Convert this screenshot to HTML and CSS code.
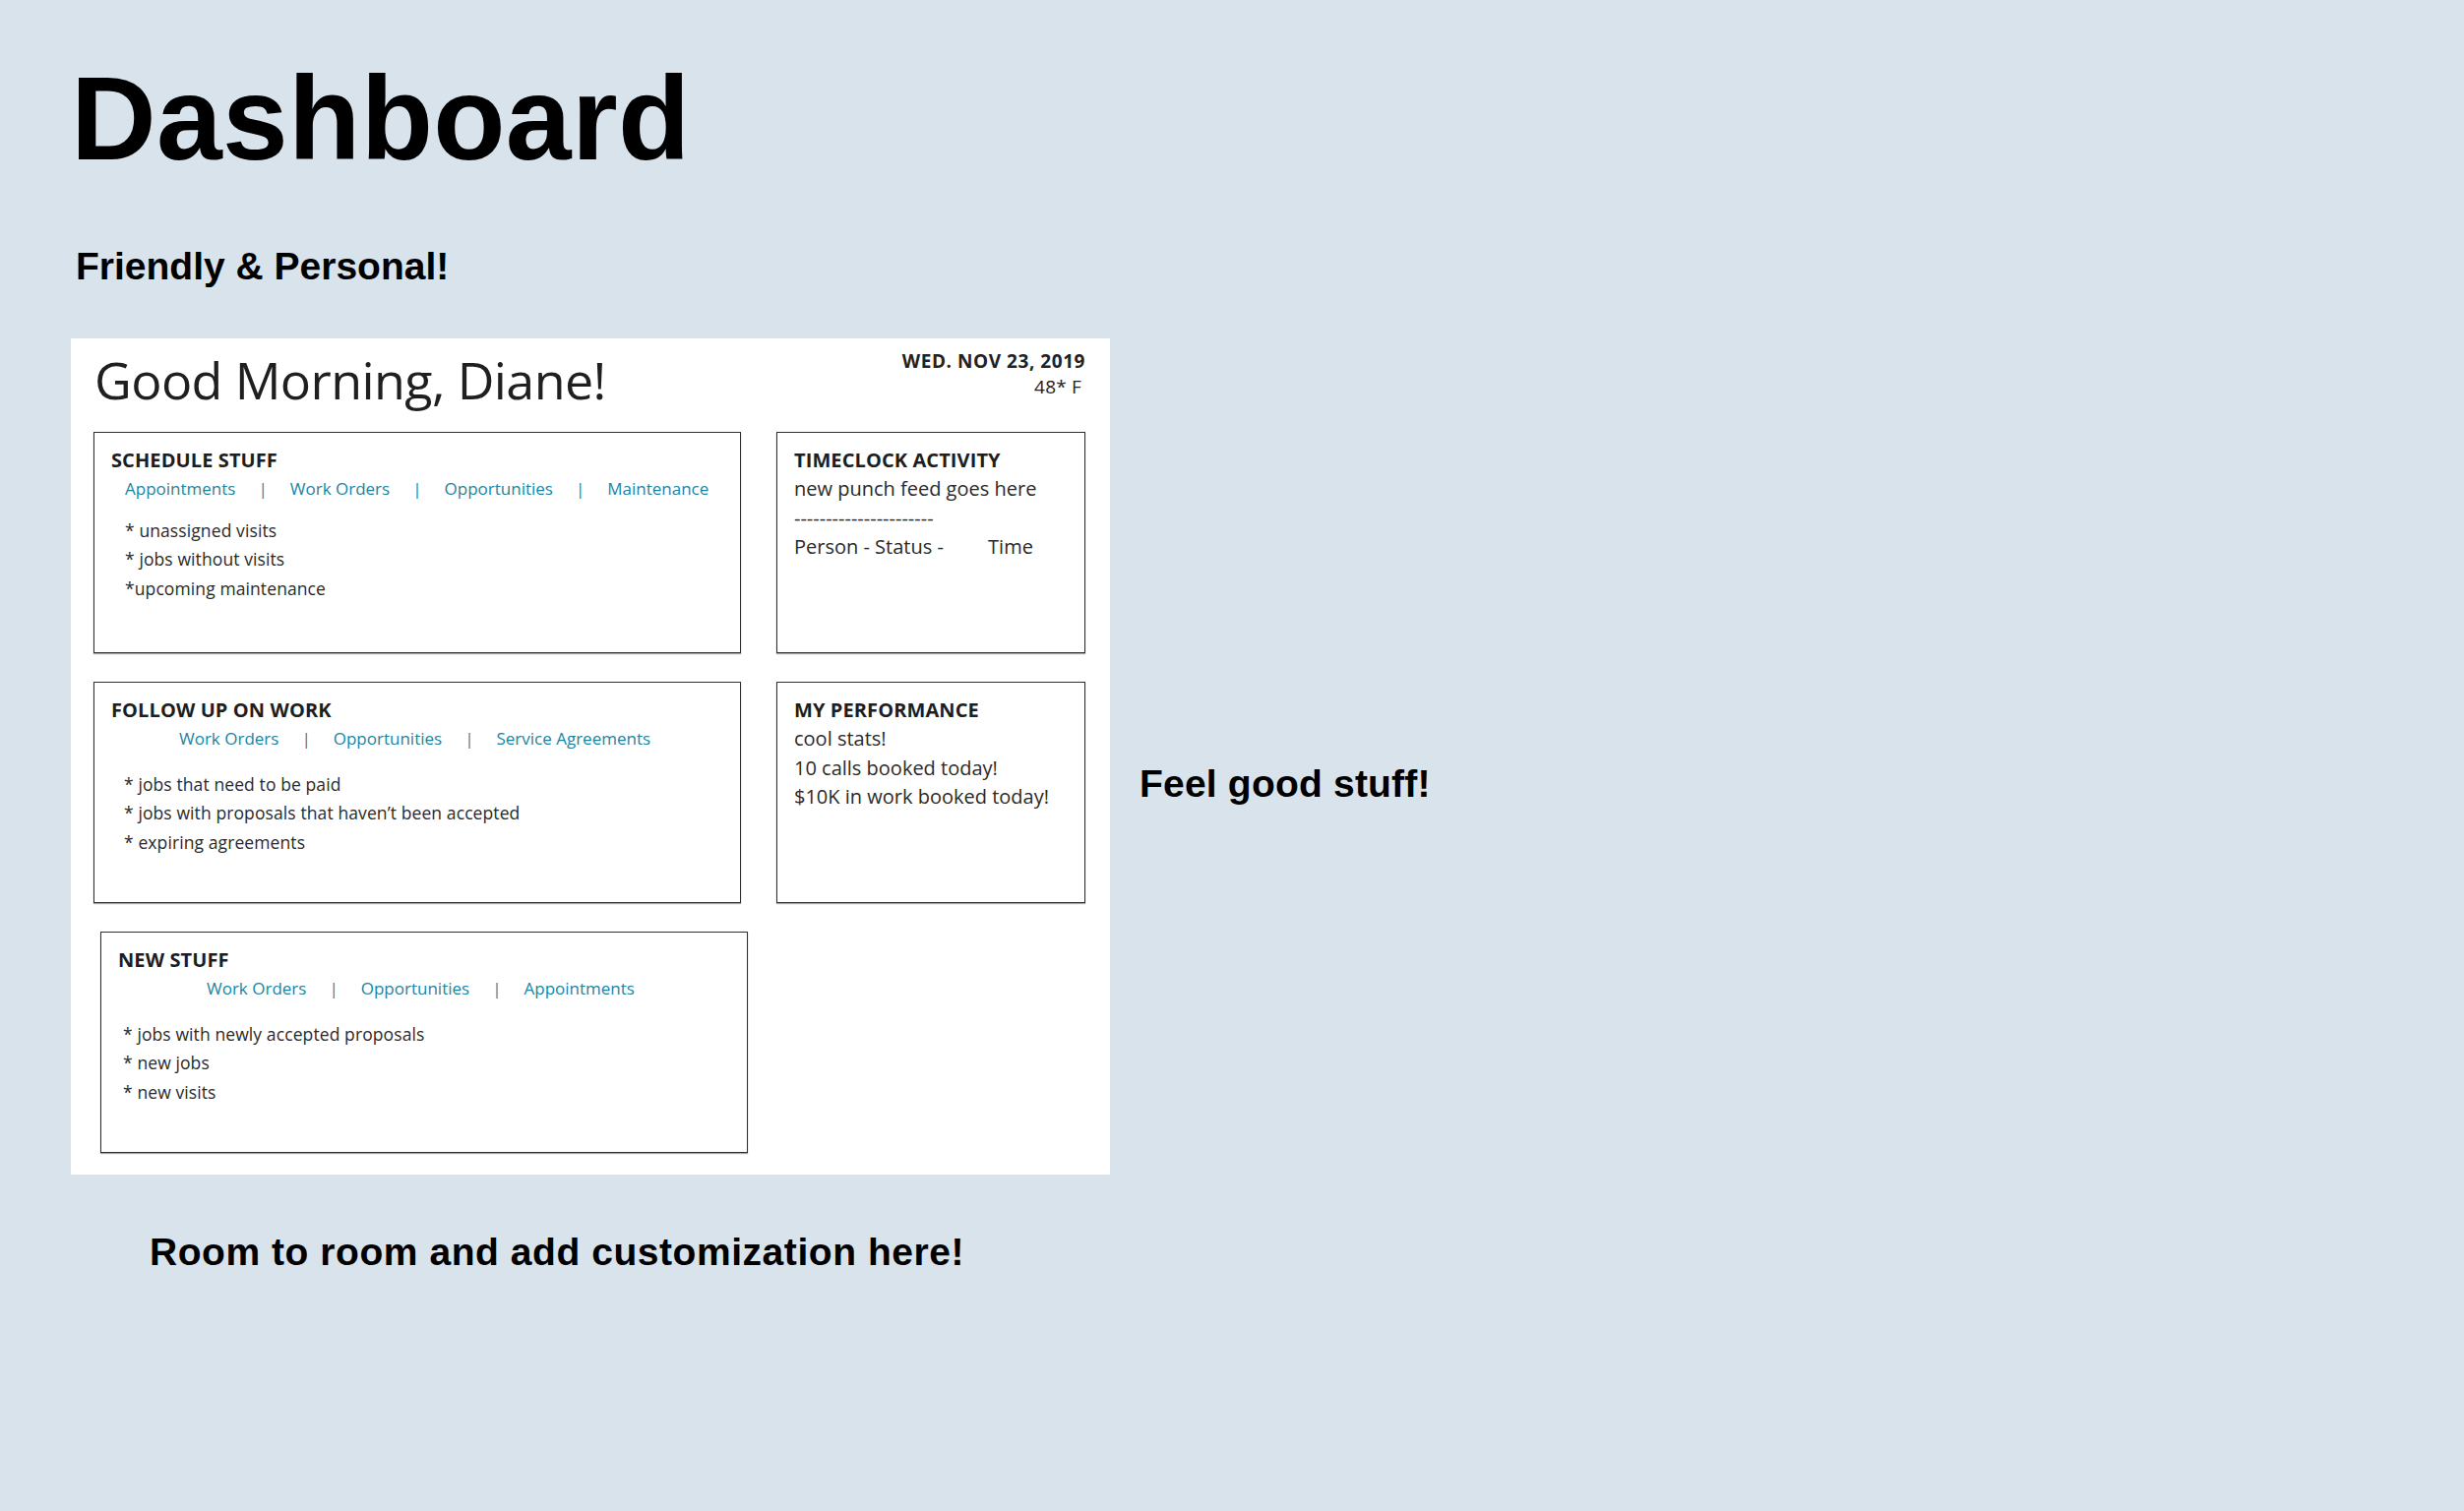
FILE: index.html
```html
<!DOCTYPE html>
<html lang="en">
<head>
<meta charset="utf-8">
<title>Dashboard</title>
<link rel="stylesheet" href="styles.css">
</head>
<body>
<div class="page">
  <h1 class="title">Dashboard</h1>
  <h2 class="note note-friendly">Friendly &amp; Personal!</h2>
  <div class="main-row">
    <section class="panel">
      <header class="panel-header">
        <h2 class="greeting">Good Morning, Diane!</h2>
        <div class="date-block">
          <div class="date">WED. NOV 23, 2019</div>
          <div class="temp">48* F</div>
        </div>
      </header>
      <div class="grid">
        <div class="box">
          <div class="box-title">SCHEDULE STUFF</div>
          <div class="links links-schedule">
            <span>Appointments</span><span>|</span><span>Work Orders</span><span>|</span><span>Opportunities</span><span>|</span><span>Maintenance</span>
          </div>
          <ul class="bullets bullets-schedule">
            <li>* unassigned visits</li>
            <li>* jobs without visits</li>
            <li>*upcoming maintenance</li>
          </ul>
        </div>
        <div class="box">
          <div class="box-title">TIMECLOCK ACTIVITY</div>
          <div class="body-lines">
            <div>new punch feed goes here</div>
            <div>----------------------</div>
            <div>Person - Status - <span class="time">Time</span></div>
          </div>
        </div>
        <div class="box">
          <div class="box-title">FOLLOW UP ON WORK</div>
          <div class="links links-follow">
            <span>Work Orders</span><span>|</span><span>Opportunities</span><span>|</span><span>Service Agreements</span>
          </div>
          <ul class="bullets bullets-follow">
            <li>* jobs that need to be paid</li>
            <li>* jobs with proposals that haven’t been accepted</li>
            <li>* expiring agreements</li>
          </ul>
        </div>
        <div class="box">
          <div class="box-title">MY PERFORMANCE</div>
          <div class="body-lines">
            <div>cool stats!</div>
            <div>10 calls booked today!</div>
            <div>$10K in work booked today!</div>
          </div>
        </div>
        <div class="box box-new">
          <div class="box-title">NEW STUFF</div>
          <div class="links links-new">
            <span>Work Orders</span><span>|</span><span>Opportunities</span><span>|</span><span>Appointments</span>
          </div>
          <ul class="bullets bullets-new">
            <li>* jobs with newly accepted proposals</li>
            <li>* new jobs</li>
            <li>* new visits</li>
          </ul>
        </div>
      </div>
    </section>
    <h2 class="note note-feel">Feel good stuff!</h2>
  </div>
  <h2 class="note note-room">Room to room and add customization here!</h2>
</div>
</body>
</html>
```
FILE: styles.css
```css
html, body {
  margin: 0;
  padding: 0;
}

body {
  background: #d9e3ec;
  font-family: "Liberation Sans", Arial, sans-serif;
  color: #000;
  min-height: 1536px;
}

.page {
  padding: 60px 0 0 72px;
}

.title {
  margin: 0 0 0 0;
  font-size: 120px;
  line-height: 1;
  font-weight: 700;
  letter-spacing: 0.3px;
}

.note {
  margin: 0;
  font-size: 39px;
  line-height: 1;
  font-weight: 700;
}

.note-friendly {
  margin: 71px 0 0 5px;
}

.main-row {
  display: flex;
  align-items: flex-start;
  margin-top: 54px;
}

.note-feel {
  margin: 433px 0 0 30px;
  letter-spacing: 0.2px;
}

.note-room {
  margin: 59px 0 0 80px;
  letter-spacing: 0.55px;
}

.panel {
  width: 1056px;
  box-sizing: border-box;
  background: #fff;
  padding: 10px 25px 22px 23px;
  font-family: "Open Sans", "Noto Sans", sans-serif;
  color: #222;
}

.panel-header {
  display: flex;
  justify-content: space-between;
  align-items: flex-start;
  margin-bottom: 26px;
}

.greeting {
  margin: 5px 0 0 1px;
  font-size: 52px;
  line-height: 54px;
  font-weight: 500;
  letter-spacing: -0.6px;
  color: #1f1f1f;
}

.date-block {
  text-align: right;
  font-size: 19px;
  line-height: 26px;
}

.date {
  font-weight: 700;
  letter-spacing: 0.55px;
}

.temp {
  padding-right: 4px;
  letter-spacing: 0.2px;
}

.grid {
  display: grid;
  grid-template-columns: 658px 314px;
  grid-auto-rows: 225px;
  column-gap: 36px;
  row-gap: 29px;
}

.box {
  box-sizing: border-box;
  border: 1px solid #2e2e2e;
  box-shadow: 0 1px 1px rgba(0, 0, 0, 0.35);
  padding: 15px 16px 0 17px;
}

.box-new {
  width: 658px;
  justify-self: start;
  margin-left: 7px;
}

.box-title {
  font-size: 20px;
  line-height: 26px;
  font-weight: 700;
  letter-spacing: 0.1px;
  color: #1e1e1e;
}

.links {
  display: flex;
  gap: 23px;
  margin-top: 3px;
  font-size: 17px;
  line-height: 26px;
  color: #1a85a2;
}

.links-schedule {
  margin-left: 14px;
}

.links-follow {
  margin-left: 69px;
}

.links-new {
  margin-left: 90px;
}

.bullets {
  list-style: none;
  margin: 18.5px 0 0 13px;
  padding: 0;
  font-size: 17.5px;
  line-height: 29.5px;
  letter-spacing: 0.1px;
  color: #2a2a2a;
}

.bullets-schedule {
  margin-top: 14.5px;
  margin-left: 14px;
}

.bullets-new {
  margin-left: 5px;
}

.body-lines {
  margin-top: 1px;
  font-size: 20px;
  line-height: 29.5px;
  color: #2a2a2a;
}

.time {
  margin-left: 40px;
}
```
